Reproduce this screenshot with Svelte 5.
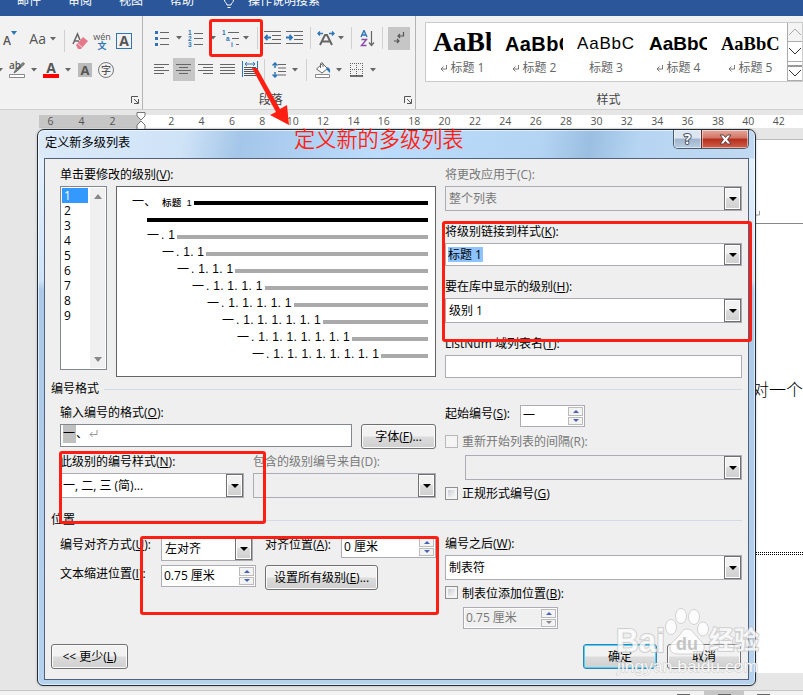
<script>
	const tabs = ['邮件', '审阅', '视图', '帮助'];

	const fontTop = ['shrink', 'case', 'sep', 'eraser', 'phonetic', 'boxed'];
	const fontBottom = ['caret', 'highlight', 'caret', 'color', 'caret', 'shade', 'circled'];
	const paraTop = [
		'bullets', 'caret', 'numbers', 'caret', 'multi', 'caret', 'sep', 'outdent', 'indent',
		'sep', 'scale', 'caret', 'sep', 'sort', 'sep', 'marks'
	];
	const paraBottom = [
		'left', 'center', 'right', 'justify', 'spread', 'sep', 'spacing', 'caret', 'sep',
		'bucket', 'caret', 'border', 'caret'
	];

	const styles = [
		{ name: '标题 1', sample: 'AaBb', look: 'h1', mark: true },
		{ name: '标题 2', sample: 'AaBbC', look: 'h2', mark: true },
		{ name: '标题 3', sample: 'AaBbCc', look: 'h3', mark: false },
		{ name: '标题 4', sample: 'AaBbC', look: 'h4', mark: true },
		{ name: '标题 5', sample: 'AaBbC', look: 'h5', mark: true }
	];

	const rulerLeft = [6, 4, 2];
	const rulerRight = Array.from({ length: 21 }, (_, i) => (i + 1) * 2);

	const levels = [1, 2, 3, 4, 5, 6, 7, 8, 9];
	const outline = [1, 2, 3, 4, 5, 6, 7, 8];
</script>

{#snippet mnemonic(text, key, tail = ':')}
	{text}(<u>{key}</u>){tail}
{/snippet}

{#snippet dropdown(text, kind = '')}
	<div class="select {kind}">
		<span class="value">{text}</span>
		<span class="drop"><svg width="8" height="4"><path d="M0 0h8L4 4z" fill="#000" /></svg></span>
	</div>
{/snippet}

{#snippet spinner(text, kind = '')}
	<div class="spinner {kind}">
		<span class="value">{text}</span>
		<span class="steps">
			<i><svg width="6" height="3"><path d="M0 3h6L3 0z" /></svg></i>
			<i><svg width="6" height="3"><path d="M0 0h6L3 3z" /></svg></i>
		</span>
	</div>
{/snippet}

{#snippet tool(name)}
	<span class="tool {name}">
		{#if name === 'caret'}
			<svg width="6" height="4"><path d="M0 0h6L3 3.5z" fill="#666" /></svg>
		{:else if name === 'sep'}
			<i></i>
		{:else if name === 'shrink'}
			<b>A</b><svg width="6" height="4"><path d="M0 0h6L3 4z" fill="#2e75b6" /></svg>
		{:else if name === 'case'}
			<span>Aa</span><svg width="6" height="4"><path d="M0 0h6L3 3.5z" fill="#666" /></svg>
		{:else if name === 'eraser'}
			<svg width="18" height="18" fill="none">
				<path d="M1 12 5.5 2 8 8M3 9h4" stroke="#666" stroke-width="1.5" />
				<path d="m4 13 7-8 5 4-7 8H6z" fill="#e6788c" />
				<path d="m5.500 11.500 5 4" stroke="#f8dfe3" />
			</svg>
		{:else if name === 'phonetic'}
			<span>wén</span><b>文</b>
		{:else if name === 'boxed'}
			<b>A</b>
		{:else if name === 'highlight'}
			<span>ab</span>
			<svg width="18" height="18" fill="none">
				<path d="m6 12 1.500-3L15 1.500 16.500 3 9 10z" fill="#888" stroke="#666" />
				<path d="M1.500 13.500h15v3h-15z" fill="#fff" stroke="#888" />
			</svg>
		{:else if name === 'color'}
			<b>A</b><i></i>
		{:else if name === 'shade'}
			<b>A</b>
		{:else if name === 'circled'}
			<b>字</b>
		{:else if name === 'bullets'}
			<svg width="14" height="16">
				<path d="M5 2.500h9M5 8.500h9M5 14.500h9" stroke="#666" />
				<path d="M0 1h3v3H0zM0 7h3v3H0zM0 13h3v3H0z" fill="#2e75b6" />
			</svg>
		{:else if name === 'numbers'}
			<svg width="16" height="17">
				<path d="M6 3.500h9M6 8.500h9M6 14.500h9" stroke="#666" />
				<g fill="#2e75b6"><text x="0" y="5">1</text><text x="0" y="11">2</text><text x="0" y="17">3</text></g>
			</svg>
		{:else if name === 'multi'}
			<svg width="18" height="17">
				<path d="M6 2.500h11M10 8.500h7M14 14.500h3" stroke="#666" />
				<g fill="#2e75b6"><text x="0" y="5">1</text><text x="4" y="11">a</text><text x="9" y="17">i</text></g>
			</svg>
		{:else if name === 'outdent' || name === 'indent'}
			<svg width="17" height="14" fill="none">
				<path d="M0 .5h17M8 4.500h9M8 8.500h9M0 12.500h17" stroke="#666" />
				{#if name === 'outdent'}
					<path d="M7 6.500H1M3.500 4 1 6.500 3.500 9" stroke="#2e75b6" stroke-width="1.800" />
				{:else}
					<path d="M0 6.500h6M3.500 4 6 6.500 3.500 9" stroke="#2e75b6" stroke-width="1.800" />
				{/if}
			</svg>
		{:else if name === 'scale'}
			<svg width="18" height="15" fill="none">
				<path d="M3 14 8 4h2l5 10M5.500 10.500h7" stroke="#666" stroke-width="2" />
				<path d="M6 2.500H1M3 .5l-2 2 2 2M12 2.500h5M15 .5l2 2-2 2" stroke="#2e75b6" stroke-width="1.400" />
			</svg>
		{:else if name === 'sort'}
			<svg width="15" height="17" fill="none">
				<path d="M1 7 4 .5 7 7M2 5h4" stroke="#2e75b6" stroke-width="1.400" />
				<path d="M1.500 9.500h5l-5 6h5" stroke="#8a4aa8" stroke-width="1.400" />
				<path d="M11.500 1v14M9 12.500l2.500 3 2.500-3" stroke="#666" stroke-width="1.200" />
			</svg>
		{:else if name === 'marks'}
			<svg width="12" height="14" fill="none" stroke="#555" stroke-width="1.200">
				<path d="M10.500 1v4H5M7 3 5 5l2 2M1 10h5M4 8l2 2-2 2" />
			</svg>
		{:else if name === 'left'}
			<svg width="15" height="11"><path d="M0 .5h15M0 3.500h10M0 6.500h15M0 9.500h10" stroke="#666" /></svg>
		{:else if name === 'center'}
			<svg width="15" height="11"><path d="M0 .5h15M3 3.500h9M0 6.500h15M3 9.500h9" stroke="#666" /></svg>
		{:else if name === 'right'}
			<svg width="15" height="11"><path d="M0 .5h15M5 3.500h10M0 6.500h15M5 9.500h10" stroke="#666" /></svg>
		{:else if name === 'justify'}
			<svg width="15" height="11"><path d="M0 .5h15M0 3.500h15M0 6.500h15M0 9.500h15" stroke="#666" /></svg>
		{:else if name === 'spread'}
			<svg width="16" height="17" fill="none">
				<path d="M.5 0v16M15.500 0v16M3 3h10M5 1 3 3l2 2M11 1l2 2-2 2" stroke="#2e75b6" />
				<path d="M2 6.500h12M2 8.500h12M2 10.500h12M2 12.500h12M2 14.500h12" stroke="#555" />
			</svg>
		{:else if name === 'spacing'}
			<svg width="15" height="16" fill="none">
				<path d="M3 1v5M.5 3.500 3 1l2.500 2.500M3 10v5M.5 12.500 3 15l2.500-2.500" stroke="#2e75b6" stroke-width="1.500" />
				<path d="M6 2.500h8M6 6h8M6 9.500h8M6 13h8" stroke="#666" />
			</svg>
		{:else if name === 'bucket'}
			<svg width="18" height="16" fill="none">
				<path d="m2.500 7 6-5.500 5 5L8 11z" fill="#fff" stroke="#666" />
				<path d="M6.500 6V1.500Q8 0 9 1.500V5" stroke="#666" />
				<path d="M12 5q5 0 4 6l-3-3" fill="#2e75b6" />
				<path d="M1.500 12.500h14v3h-14z" fill="#fff" stroke="#888" />
			</svg>
		{:else if name === 'border'}
			<svg width="14" height="14" fill="none">
				<path d="M.5 0v13M6.500 0v13M12.500 0v13M0 .5h13M0 6.500h13" stroke="#666" stroke-dasharray="1 1" />
				<path d="M0 13h13" stroke="#444" stroke-width="1.500" />
			</svg>
		{/if}
	</span>
{/snippet}

{#snippet launcher()}
	<svg class="launcher" width="8" height="8" fill="none" stroke="#555">
		<path d="M.5 7V.5H7M3 3l4 4M7.500 3v4.500H3" />
	</svg>
{/snippet}

<div class="screen">
	<header class="tabs">
		{#each tabs as tab}<span class="tab">{tab}</span>{/each}
		<svg width="12" height="14" fill="none" stroke="#fff">
			<path d="M4 9C4 7 1.500 6.500 1.500 4a4.500 4 0 0 1 9 0c0 2.500-2.500 3-2.500 5zM4.500 11.500h3" />
		</svg>
		<span>操作说明搜索</span>
	</header>

	<div class="ribbon">
		<div class="group font">
			<div class="row">{#each fontTop as name}{@render tool(name)}{/each}</div>
			<div class="row second">{#each fontBottom as name}{@render tool(name)}{/each}</div>
			<footer><span></span>{@render launcher()}</footer>
		</div>
		<div class="group para">
			<div class="row">{#each paraTop as name}{@render tool(name)}{/each}</div>
			<div class="row second">{#each paraBottom as name}{@render tool(name)}{/each}</div>
			<footer><span>段落</span>{@render launcher()}</footer>
		</div>
		<div class="group gallery-group">
			<div class="gallery">
				{#each styles as style}
					<div class="card">
						<div class="sample {style.look}">{style.sample}</div>
						<div class="card-name">
							{#if style.mark}
								<svg width="8" height="7" fill="none" stroke="#777"><path d="M6.500 0v4H1M3.500 1.500 1 4l2.500 2.500" /></svg>
							{/if}
							{style.name}
						</div>
					</div>
				{/each}
				<div class="scroll">
					<span class="off"><svg width="14" height="8" fill="none" stroke="#aaa"><path d="m1 7 6-6 6 6" /></svg></span>
					<span><svg width="14" height="8" fill="none" stroke="#333"><path d="m1 1 6 6 6-6" /></svg></span>
					<span class="more"><svg width="14" height="12" fill="none" stroke="#333"><path d="M0 1h14M1 5l6 6 6-6" /></svg></span>
				</div>
			</div>
			<footer><span>样式</span></footer>
		</div>
	</div>

	<div class="ruler">
		<div class="margin">{#each rulerLeft as n}<span>{n}</span>{/each}</div>
		<svg class="stop" width="11" height="18" fill="#fff" stroke="#777">
			<path d="M1 .5h8v3.500l-4 4-4-4zM1 17v-4l4-4 4 4v4" />
		</svg>
		<div class="measure">{#each rulerRight as n}<span>{n}</span>{/each}</div>
	</div>

	<main class="desk">
		<div class="page">
			<svg class="return" width="6" height="7" fill="none" stroke="#999"><path d="M4.500 0v4H0" /></svg>
			<hr />
			<p>对一个</p>
			<div class="dots"></div>
		</div>
	</main>
	<div class="status"><i></i><b><i></i></b><i></i></div>

	<section class="dialog">
		<div class="caption">
			<h1>定义新多级列表</h1>
			<div class="window-buttons">
				<button class="help">?</button>
				<button class="close">
					<svg width="13" height="11"><path d="M1 1h3.500l2 2.500L8.500 1H12L8.500 5.500 12 10H8.500l-2-2.500-2 2.500H1l3.500-4.500z" fill="#fff" stroke="#5c4048" /></svg>
				</button>
			</div>
		</div>

		<div class="client">
			<div class="columns top">
				<div>
					<div class="label">{@render mnemonic('单击要修改的级别', 'V')}</div>
					<div class="pick">
						<div class="levels">
							<ul>
								{#each levels as level}<li class:selected={level === 1}>{level}</li>{/each}
							</ul>
							<div class="bar">
								<svg width="8" height="5"><path d="M0 5h8L4 0z" /></svg>
								<svg width="8" height="5"><path d="M0 0h8L4 5z" /></svg>
							</div>
						</div>
						<div class="preview">
							<div class="line first"><span>一、</span><b>标题 1</b><i></i></div>
							<div class="line full"><i></i></div>
							{#each outline as depth}
								<div class="line" style:margin-left="{depth * 15}px">
									<em>一</em><span>{'. 1'.repeat(depth)}</span><i></i>
								</div>
							{/each}
						</div>
					</div>
				</div>
				<div class="fields">
					<div>
						<div class="label off">将更改应用于(C):</div>
						{@render dropdown('整个列表', 'off')}
					</div>
					<div>
						<div class="label">{@render mnemonic('将级别链接到样式', 'K')}</div>
						{@render dropdown('标题 1', 'marked')}
					</div>
					<div>
						<div class="label">{@render mnemonic('要在库中显示的级别', 'H')}</div>
						{@render dropdown('级别 1')}
					</div>
					<div>
						<div class="label">{@render mnemonic('ListNum 域列表名', 'T')}</div>
						<div class="input"></div>
					</div>
				</div>
			</div>

			<div class="legend">编号格式</div>
			<div class="columns format">
				<div>
					<div class="label">{@render mnemonic('输入编号的格式', 'O')}</div>
					<div class="pair number">
						<div class="input dark">
							<mark>一</mark>、
							<svg width="9" height="8" fill="none" stroke="#999"><path d="M8 0v4.500H1M3.500 2 1 4.500 3.500 7" /></svg>
						</div>
						<button>{@render mnemonic('字体', 'F', '...')}</button>
					</div>
					<div class="pair">
						<div>
							<div class="label">{@render mnemonic('此级别的编号样式', 'N')}</div>
							{@render dropdown('一, 二, 三 (简)...', 'tight')}
						</div>
						<div>
							<div class="label off">包含的级别编号来自(D):</div>
							{@render dropdown('', 'off')}
						</div>
					</div>
				</div>
				<div class="restart">
					<div class="start">
						<span>{@render mnemonic('起始编号', 'S')}</span>
						{@render spinner('一')}
					</div>
					<div class="check off"><i></i>重新开始列表的间隔(R):</div>
					{@render dropdown('', 'off')}
					<div class="check"><i></i><span>{@render mnemonic('正规形式编号', 'G', '')}</span></div>
				</div>
			</div>

			<div class="legend">位置</div>
			<div class="columns place">
				<div>
					<div class="align">
						<span>{@render mnemonic('编号对齐方式', 'U')}</span>
						{@render dropdown('左对齐')}
						<span class="second-label">{@render mnemonic('对齐位置', 'A')}</span>
						{@render spinner('0 厘米')}
					</div>
					<div class="align text">
						<span>{@render mnemonic('文本缩进位置', 'I')}</span>
						{@render spinner('0.75 厘米')}
						<button>{@render mnemonic('设置所有级别', 'E', '...')}</button>
					</div>
				</div>
				<div class="after">
					<div class="label">{@render mnemonic('编号之后', 'W')}</div>
					{@render dropdown('制表符')}
					<div class="check"><i></i><span>{@render mnemonic('制表位添加位置', 'B')}</span></div>
					{@render spinner('0.75 厘米', 'off')}
				</div>
			</div>

			<div class="actions">
				<button class="less">&lt;&lt; {@render mnemonic('更少', 'L', '')}</button>
				<button class="default">确定</button>
				<button>取消</button>
			</div>
		</div>
	</section>

	<!-- tutorial markup drawn over the window -->
	<div class="frame toolbar"></div>
	<div class="frame link"></div>
	<div class="frame numbering"></div>
	<div class="frame position"></div>
	<svg class="pointer" width="44" height="62"><path d="M2 2 7 2 30 43 37 39 39 59 20 49 26 46z" fill="#ff1e12" /></svg>
	<div class="note">定义新的多级列表</div>

	<svg class="watermark" width="150" height="75">
		<g fill="#fff" fill-opacity=".8" stroke="#bbb" stroke-opacity=".6">
			<text x="1" y="48" class="bai" textLength="49" lengthAdjust="spacingAndGlyphs">Bai</text>
			<ellipse cx="56" cy="23" rx="5.500" ry="7.500" />
			<ellipse cx="66" cy="12" rx="5.500" ry="7.500" />
			<ellipse cx="79" cy="13" rx="5.500" ry="7.500" />
			<ellipse cx="88" cy="25" rx="5.500" ry="7" />
			<path d="M72 25c5 0 7 5 11 9s7 6 6 11-5 5-9 5-12 0-16 0-9-1-9-6 4-7 8-11 4-8 9-8z" />
			<text x="94" y="45" class="cn">经验</text>
		</g>
		<text x="61" y="46" class="du">du</text>
		<text x="2" y="68" class="site" textLength="141" lengthAdjust="spacingAndGlyphs">jingyan.baidu.com</text>
	</svg>
</div>

<style>
	:global(body) {
		overflow: hidden;
	}
	.screen {
		position: relative;
		display: flex;
		flex-direction: column;
		width: 803px;
		height: 695px;
		overflow: hidden;
		background: #e6e6e6;
		color: #000;
		font: 12px/18px 'Open Sans', 'Noto Sans CJK SC', sans-serif;
	}
	.screen svg {
		flex: none;
		display: block;
	}
	.tabs {
		display: flex;
		flex: none;
		height: 16px;
		padding-left: 17px;
		overflow: hidden;
		background: #2b579a;
		color: #fff;
	}
	.tabs span {
		margin-top: -8px;
	}
	.tabs .tab {
		width: 51px;
	}
	.tabs svg {
		margin: -4px 13px 0 2px;
	}

	/* ribbon */
	.ribbon {
		display: flex;
		flex: none;
		height: 93px;
		background: #f2f2f2;
		border-bottom: 1px solid #cfcfcf;
	}
	.group {
		position: relative;
		display: flex;
		flex-direction: column;
		box-sizing: border-box;
		padding-top: 6px;
	}
	.group:not(:last-child) {
		border-right: 1px solid #b4b4b4;
	}
	.font {
		width: 143px;
	}
	.para {
		width: 274px;
	}
	.gallery-group {
		flex: 1;
		padding-left: 9px;
	}
	.row {
		display: grid;
		height: 32px;
	}
	.row.second {
		height: 31px;
	}
	.font .row {
		grid-template-columns: 18px 38px 16px 18px 24px 20px;
	}
	.font .row.second {
		grid-template-columns: 7px 20px 14px 20px 14px 20px 22px;
	}
	.font .second > :first-child {
		margin-left: -7px;
	}
	.para .row {
		padding-left: 10px;
		grid-template-columns: 18px 16px 18px 17px 18px 13px 9px 22px 22px 9px 22px 9px 12px 20px 10px 22px;
	}
	.para .row.second {
		padding-left: 8px;
		grid-template-columns: 22px 22px 22px 22px 22px 8px 22px 9px 14px 18px 14px 22px 11px;
	}
	.group footer {
		display: flex;
		align-items: center;
		height: 18px;
		margin-top: 6px;
		padding-right: 3px;
		color: #444;
	}
	.group footer span {
		flex: 1;
		text-align: center;
	}
	.para footer span {
		text-indent: -5px;
	}
	.gallery-group footer {
		margin-top: 9px;
		padding-right: 11px;
	}
	.tool {
		display: flex;
		align-items: center;
		justify-content: center;
		color: #555;
	}
	.sep i {
		width: 1px;
		height: 22px;
		background: #d0d0d0;
	}
	.shrink {
		align-items: flex-start;
		justify-content: flex-start;
		font: bold 12px/37px 'Open Sans', sans-serif;
		padding-left: 3px;
	}
	.shrink b {
		font-weight: 600;
	}
	.shrink svg {
		margin-top: 9px;
	}
	.case {
		justify-content: flex-end;
		gap: 4px;
		font-size: 14px;
		line-height: 16px;
		padding-bottom: 3px;
	}
	.phonetic {
		flex-direction: column;
		line-height: 9px;
		font-size: 9px;
	}
	.phonetic b {
		color: #2e75b6;
		font-size: 9px;
	}
	.boxed b {
		width: 14px;
		border: 1px solid #2e75b6;
		line-height: 14px;
		text-align: center;
		font-size: 14px;
	}
	.highlight {
		position: relative;
	}
	.highlight span {
		position: absolute;
		left: 2px;
		top: 2px;
		font-size: 10px;
		font-weight: 600;
	}
	.color {
		flex-direction: column;
		font-size: 14px;
		line-height: 12px;
	}
	.color i {
		width: 16px;
		height: 4px;
		background: #f00;
	}
	.shade b {
		width: 14px;
		background: #bbb;
		line-height: 14px;
		text-align: center;
		font-size: 13px;
	}
	.circled b {
		width: 14px;
		border: 1px solid #777;
		border-radius: 50%;
		font-size: 10px;
		font-weight: 500;
		line-height: 14px;
		text-align: center;
	}
	.numbers text,
	.multi text {
		font: bold 6.5px 'Liberation Sans', sans-serif;
	}
	.marks,
	.center {
		align-self: center;
		height: 23px;
		background: #c6c6c6;
	}
	.gallery {
		display: flex;
		height: 58px;
		border: 1px solid #cbcbcb;
		background: #fff;
		padding-left: 7px;
	}
	.card {
		width: 58px;
		margin-right: 14px;
		overflow: hidden;
		flex: none;
	}
	.card:nth-child(5) {
		margin-right: 8px;
	}
	.sample {
		height: 36px;
		white-space: nowrap;
		overflow: hidden;
	}
	.h1 {
		font: bold 27.5px/38px 'Liberation Serif', serif;
	}
	.h2 {
		font: bold 20px/42px 'Liberation Sans', sans-serif;
		letter-spacing: 0.4px;
	}
	.h3 {
		font: 17px/42px 'Liberation Sans', sans-serif;
		letter-spacing: 0.8px;
	}
	.h4 {
		font: bold 19px/42px 'Liberation Sans', sans-serif;
	}
	.h5 {
		font: bold 18.5px/42px 'Liberation Serif', serif;
	}
	.card-name {
		display: flex;
		align-items: center;
		justify-content: center;
		gap: 3px;
		color: #666;
		line-height: 18px;
	}
	.scroll {
		display: flex;
		flex-direction: column;
		flex: 1;
		overflow: hidden;
		border-left: 1px solid #ababab;
	}
	.scroll span {
		display: flex;
		align-items: center;
		flex: 1;
		border-bottom: 1px solid #ababab;
	}
	.scroll .off {
		background: #f4f4f4;
	}

	/* ruler */
	.ruler {
		position: relative;
		display: flex;
		flex: none;
		margin: 5px 0 0 39px;
		height: 13px;
		background: #fff;
		color: #555;
		font: 10.5px/13px 'Open Sans', sans-serif;
	}
	.ruler span {
		flex: none;
		width: 30.38px;
		text-align: center;
	}
	.margin {
		display: flex;
		width: 102px;
		box-sizing: border-box;
		background: #c6c6c6;
	}
	.margin span {
		width: 31px;
		text-indent: -8px;
	}
	.measure {
		display: flex;
		padding-left: 15px;
	}
	.stop {
		position: absolute;
		left: 97px;
		top: -3px;
	}
	.desk {
		flex: 1;
		padding: 11px 0 17px 60px;
	}
	.page {
		display: flex;
		flex-direction: column;
		align-items: flex-end;
		box-sizing: border-box;
		height: 534px;
		border-top: 1px solid #bbb;
		background: #fff;
	}
	.return {
		margin: 71px 42px 5px 0;
	}
	.page hr {
		width: 100%;
		margin: 0;
		border: 0;
		border-top: 1px solid #888;
	}
	.page p {
		margin: 154px 0 0;
		font-size: 17px;
		font-weight: 300;
		line-height: 24px;
	}
	.dots {
		width: 100%;
		height: 1px;
		margin-top: 150px;
		border-top: 1px dotted #000;
		border-bottom: 1px dotted #000;
	}
	.status {
		display: flex;
		flex: none;
		height: 4px;
		padding-left: 677px;
		border-top: 1px solid #c6c6c6;
		background: #f2f2f2;
		align-items: flex-end;
	}
	.status i {
		width: 13px;
		height: 1px;
		background: #666;
	}
	.status b {
		display: flex;
		align-items: flex-end;
		justify-content: center;
		width: 40px;
		height: 4px;
		margin: 0 13px 0 14px;
		background: #c6c6c6;
	}

	/* dialog window */
	.dialog {
		position: absolute;
		left: 37px;
		top: 129px;
		box-sizing: border-box;
		width: 719px;
		height: 557px;
		border: 1px solid #222c38;
		border-radius: 7px 7px 6px 6px;
		padding: 0 6px 6px;
		background: linear-gradient(180deg, transparent 0 28px, #e3f0fc 29px, #cfe3f8 150px, #abc9e8 160px, #b5d2ef 100%),
			linear-gradient(100deg, #dceafa 0, #cfe3f7 18%, #a4c6e8 25%, #bcdcfd 42%, #b4d4f3 62%, #9bbfe1 68%, #b6d5f3 74%, #cadcf0);
		box-shadow: inset 0 0 0 1px #ffffff99, 0 0 3px #0003;
	}
	.caption {
		display: flex;
		justify-content: space-between;
		height: 28px;
	}
	.caption h1 {
		margin: 0 0 0 1px;
		font: 12.2px/25px 'Noto Sans CJK SC', sans-serif;
	}
	.window-buttons {
		display: flex;
		align-self: flex-start;
		overflow: hidden;
		border: 1px solid #4b5968;
		border-top: 0;
		border-radius: 0 0 5px 5px;
	}
	.window-buttons button {
		display: flex;
		align-items: center;
		justify-content: center;
		min-width: 0;
		width: 27px;
		height: 18px;
		padding: 0;
		border: 0;
		border-radius: 0;
		box-shadow: inset 0 0 0 1px #ffffff80;
	}
	.window-buttons .help {
		background: linear-gradient(#dbe6f1 45%, #9fb4ca 50%, #b9cde2);
		color: #fff;
		font-size: 14px;
		font-weight: bold;
		-webkit-text-stroke: 2px #4c5566;
		paint-order: stroke fill;
	}
	.window-buttons .close {
		width: 47px;
		border-left: 1px solid #5c2a28;
		background: linear-gradient(#e5a89c, #d27464 45%, #b52d1c 50%, #d0604a);
	}
	.client {
		box-sizing: border-box;
		height: 522px;
		border: 1px solid #53627a;
		padding: 3px 6px 0;
		background: #efefef;
	}
	.columns {
		display: grid;
		grid-template-columns: 376px 297px;
		column-gap: 9px;
		padding-left: 9px;
	}
	.label {
		height: 24px;
		line-height: 26px;
		white-space: nowrap;
	}
	.off {
		color: #787878;
	}
	.top {
		height: 218px;
	}
	.fields {
		display: flex;
		flex-direction: column;
		gap: 8px;
	}
	.pick {
		display: flex;
		align-items: flex-start;
		gap: 9px;
	}
	.levels {
		display: flex;
		box-sizing: border-box;
		width: 47px;
		height: 184px;
		border: 1px solid #828790;
		padding: 1px;
		background: #fff;
	}
	.levels ul {
		width: 26px;
		margin: 0;
		padding: 0;
		list-style: none;
	}
	.levels li {
		height: 15px;
		padding-left: 2px;
		line-height: 15px;
	}
	.levels .selected {
		background: #39f;
		color: #fff;
	}
	.bar {
		display: flex;
		flex: 1;
		flex-direction: column;
		align-items: center;
		justify-content: space-between;
		margin-left: 2px;
		padding: 6px 0;
		background: #f0f0f0;
		fill: #888;
	}
	.preview {
		box-sizing: border-box;
		width: 320px;
		height: 191px;
		padding: 7px 7px 0 15px;
		border: 1px solid #646464;
		background: #fff;
	}
	.line {
		display: flex;
		align-items: center;
		height: 17px;
		font: 12px/17px 'Liberation Sans', 'Noto Sans CJK SC', sans-serif;
		letter-spacing: 0.27px;
	}
	.line em {
		width: 14px;
		font-style: normal;
	}
	.line span {
		white-space: pre;
		height: 19px;
	}
	.line i {
		flex: 1;
		height: 4px;
		margin-left: 2px;
		background: #aaa;
	}
	.line.first span {
		width: 30px;
		height: auto;
	}
	.line.first b {
		width: 30px;
		font: 500 9.5px/17px 'Liberation Sans', 'Noto Sans CJK SC', sans-serif;
		word-spacing: 2px;
		white-space: nowrap;
	}
	.line.first i,
	.line.full i {
		background: #000;
	}
	.line.full {
		margin-left: 13px;
	}
	.select,
	.spinner,
	.input {
		display: flex;
		box-sizing: border-box;
		border: 1px solid #abadb3;
		background: #fff;
	}
	.select {
		height: 25px;
	}
	.select.off {
		background: #efefef;
	}
	.select .value {
		flex: 1;
		padding-left: 3px;
		line-height: 24px;
		white-space: nowrap;
	}
	.drop {
		display: flex;
		align-items: center;
		justify-content: center;
		width: 15px;
		border: 1px solid #707070;
		box-shadow: inset 0 0 0 1px #fff;
		background: linear-gradient(#f2f2f2 48%, #dcdcdc 50%, #cfcfcf);
	}
	.select.marked {
		height: 23px;
	}
	.select.marked .value {
		flex: none;
		height: 15px;
		margin: 3px auto 0 2px;
		padding: 0 1px 0 0;
		line-height: 15px;
		background: #8dc3ff;
	}
	.select.tight .value {
		padding-left: 2px;
	}
	.input {
		height: 23px;
	}
	.input.dark {
		border-color: #828790;
		padding: 0 2px;
	}
	.input mark {
		width: 13px;
		height: 18px;
		background: #c0c0c0;
	}
	.input svg {
		margin: 5px 0 0 1px;
	}
	.spinner {
		height: 22px;
		padding: 1px;
	}
	.spinner .value {
		flex: 1;
		padding-left: 1px;
		line-height: 18px;
		white-space: nowrap;
	}
	.steps {
		display: flex;
		flex-direction: column;
		gap: 1px;
		width: 15px;
	}
	.steps i {
		display: flex;
		flex: 1;
		align-items: center;
		justify-content: center;
		border: 1px solid #bbb;
		background: #f3f3f3;
		fill: #4661b5;
	}
	.spinner.off .value {
		background: #f0f0f0;
	}
	.spinner.off i:last-child {
		fill: #888;
	}
	.legend {
		display: flex;
		align-items: center;
		gap: 5px;
		height: 18px;
		line-height: 20px;
	}
	.legend::after {
		content: '';
		flex: 1;
		height: 1px;
		background: #d0dbe7;
	}
	.format {
		height: 111px;
		padding-top: 2px;
	}
	.pair {
		display: grid;
		grid-template-columns: 184px 183px;
		gap: 9px;
	}
	.pair.number {
		grid-template-columns: 292px 75px;
		height: 25px;
	}
	button {
		box-sizing: border-box;
		height: 25px;
		min-width: 74px;
		padding: 0 4px;
		border: 1px solid #707070;
		border-radius: 3px;
		background: linear-gradient(#f2f2f2 48%, #dcdcdc 52%, #cfcfcf);
		box-shadow: inset 0 0 0 1px #fcfcfc;
		color: #000;
		font: inherit;
		white-space: nowrap;
	}
	.restart {
		padding-top: 5px;
	}
	.start {
		display: grid;
		grid-template-columns: 75px 65px;
		height: 26px;
	}
	.check {
		display: flex;
		align-items: center;
		gap: 4px;
		height: 22px;
	}
	.check > i {
		width: 7px;
		height: 7px;
		border: 2px solid #f4f4f4;
		outline: 1px solid #8e8f8f;
		margin: 0 1px 2px;
		background: linear-gradient(135deg, #cbcfd5, #f6f6f6);
	}
	.check.off > i {
		outline-color: #b8b8b8;
		background: #f6f6f6;
	}
	.restart .select {
		margin: 2px 0 3px 20px;
	}
	.place {
		height: 115px;
	}
	.align {
		display: grid;
		grid-template-columns: 101px 92px 12px 76px 95px;
		height: 30px;
		padding-top: 7px;
		box-sizing: border-box;
	}
	.align > span {
		white-space: nowrap;
	}
	.align > .second-label {
		grid-column: 4;
	}
	.align .select {
		grid-column: 2;
	}
	.align.text {
		grid-template-columns: 101px 95px 122px;
		padding-top: 6px;
	}
	.align.text button {
		margin-left: 9px;
	}
	.after {
		padding-top: 2px;
	}
	.after .check {
		height: 27px;
	}
	.after .spinner {
		width: 95px;
		margin-left: 18px;
	}
	.actions {
		display: flex;
		gap: 10px;
		padding-right: 1px;
	}
	.less {
		width: 77px;
		margin-right: auto;
	}
	.default {
		border-color: #2c84b8;
		box-shadow: inset 0 0 0 1px #4fd0f8;
	}

	/* overlays */
	.frame {
		position: absolute;
		box-sizing: border-box;
		border: 3px solid #ff1e12;
		border-radius: 3px;
	}
	.frame.toolbar {
		left: 209px;
		top: 19px;
		width: 54px;
		height: 38px;
	}
	.frame.link {
		left: 442px;
		top: 221px;
		width: 310px;
		height: 121px;
	}
	.frame.numbering {
		left: 59px;
		top: 451px;
		width: 207px;
		height: 73px;
	}
	.frame.position {
		left: 140px;
		top: 536px;
		width: 299px;
		height: 79px;
	}
	.pointer {
		position: absolute;
		left: 250px;
		top: 66px;
	}
	.note {
		position: absolute;
		left: 294px;
		top: 123px;
		color: #ff1e12;
		font: 350 21.2px/30px 'Noto Sans CJK SC', sans-serif;
		white-space: nowrap;
	}
	.watermark {
		position: absolute;
		left: 615px;
		top: 604px;
	}
	.bai,
	.cn {
		font: bold 33px 'Liberation Sans', sans-serif;
		stroke-width: 2px;
		paint-order: stroke;
	}
	.cn {
		font: bold 25px 'Noto Sans CJK SC', sans-serif;
	}
	.du {
		fill: #c4c4c4;
		font: bold 18px 'Liberation Sans', sans-serif;
	}
	.site {
		fill: #ffffffd9;
		stroke: #bbb;
		stroke-width: 1px;
		stroke-opacity: 0.7;
		paint-order: stroke;
		font: 17px 'Liberation Sans', sans-serif;
	}
</style>
